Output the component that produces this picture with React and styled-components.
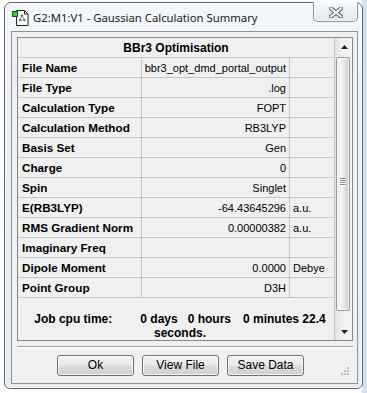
import styled, { createGlobalStyle } from "styled-components";

const GlobalStyle = createGlobalStyle`
  html, body {
    margin: 0;
    padding: 0;
  }
  body {
    background: #ffffff;
    overflow: hidden;
    font-family: "Liberation Sans", Arial, sans-serif;
  }
`;

const rows = [
  ["File Name", "bbr3_opt_dmd_portal_output", ""],
  ["File Type", ".log", ""],
  ["Calculation Type", "FOPT", ""],
  ["Calculation Method", "RB3LYP", ""],
  ["Basis Set", "Gen", ""],
  ["Charge", "0", ""],
  ["Spin", "Singlet", ""],
  ["E(RB3LYP)", "-64.43645296", "a.u."],
  ["RMS Gradient Norm", "0.00000382", "a.u."],
  ["Imaginary Freq", "", ""],
  ["Dipole Moment", "0.0000", "Debye"],
  ["Point Group", "D3H", ""],
];

function AppIcon() {
  return (
    <IconSvg width="17" height="16" viewBox="0 0 17 16">
      <path d="M4.5 0.5h8l3.5 3.5v11.5h-11.5z" fill="#fff" stroke="#222" />
      <path d="M12.5 0.5v3.5h3.5" fill="none" stroke="#222" />
      <path d="M10 5.5L8 10M10 5.5L12.5 10M8 10h4.5" stroke="#888" strokeWidth="1" fill="none" />
      <circle cx="10" cy="5.5" r="1.2" fill="#777" />
      <circle cx="8" cy="10" r="1.2" fill="#777" />
      <circle cx="12.5" cy="10" r="1.2" fill="#777" />
      <rect x="0.5" y="1.5" width="5" height="5" fill="#2fd12f" stroke="#1a5a1a" />
    </IconSvg>
  );
}

function CloseGlyph() {
  return (
    <svg width="14" height="11" viewBox="0 0 14 11">
      <path d="M2 1.5L12 9.5M12 1.5L2 9.5" stroke="#5d6670" strokeWidth="4.2" strokeLinecap="square" />
      <path d="M2 1.5L12 9.5M12 1.5L2 9.5" stroke="#f4f6f8" strokeWidth="2" strokeLinecap="square" />
    </svg>
  );
}

function Arrow({ down }) {
  return (
    <svg width="7" height="4" viewBox="0 0 7 4">
      <path d={down ? "M0 0h7L3.5 4z" : "M0 4h7L3.5 0z"} fill="#222" />
    </svg>
  );
}

function Grip() {
  return (
    <svg width="8" height="8" viewBox="0 0 8 8">
      <rect x="6" y="0" width="2" height="2" fill="#b8bcc2" />
      <rect x="3" y="3" width="2" height="2" fill="#b8bcc2" />
      <rect x="6" y="3" width="2" height="2" fill="#b8bcc2" />
      <rect x="0" y="6" width="2" height="2" fill="#b8bcc2" />
      <rect x="3" y="6" width="2" height="2" fill="#b8bcc2" />
      <rect x="6" y="6" width="2" height="2" fill="#b8bcc2" />
    </svg>
  );
}

export default function App() {
  return (
    <Desktop>
      <GlobalStyle />
      <Window>
        <TitleBar>
          <AppIcon />
          <Title>G2:M1:V1 - Gaussian Calculation Summary</Title>
          <CloseButton>
            <CloseGlyph />
          </CloseButton>
        </TitleBar>
        <Client>
          <Panel>
            <Table>
              <HeaderRow>BBr3 Optimisation</HeaderRow>
              {rows.map(([label, value, unit]) => (
                <Row key={label}>
                  <LabelCell>{label}</LabelCell>
                  <ValueCell>{value}</ValueCell>
                  <UnitCell>{unit}</UnitCell>
                </Row>
              ))}
              <JobArea>
                <JobLine>
                  Job cpu time:<Space w={28} />0 days<Space w={10} />0 hours
                  <Space w={12} />0 minutes 22.4
                </JobLine>
                <JobLine>seconds.</JobLine>
              </JobArea>
            </Table>
            <ScrollBar>
              <ArrowBox>
                <Arrow />
              </ArrowBox>
              <Track>
                <Thumb>
                  <GripLines>
                    <i />
                    <i />
                    <i />
                    <i />
                  </GripLines>
                </Thumb>
              </Track>
              <ArrowBox>
                <Arrow down />
              </ArrowBox>
            </ScrollBar>
          </Panel>
          <Separator />
          <ButtonRow>
            <PushButton>Ok</PushButton>
            <PushButton>View File</PushButton>
            <PushButton>Save Data</PushButton>
          </ButtonRow>
          <ResizeGrip>
            <Grip />
          </ResizeGrip>
        </Client>
      </Window>
    </Desktop>
  );
}

const Desktop = styled.div`
  width: 367px;
  height: 393px;
  box-sizing: border-box;
  padding: 2px 0 0 4px;
  background: linear-gradient(90deg, #ffffff 0 362px, #d3e2f1 362px);
`;

const Window = styled.div`
  position: relative;
  width: 359px;
  height: 387px;
  box-sizing: border-box;
  border: 1px solid #5b636d;
  border-radius: 7px 7px 6px 6px;
  background: linear-gradient(180deg, #f4f7fa 0%, #eaeff5 40%, #e8edf3 100%);
  box-shadow: inset 0 0 0 1px rgba(255, 255, 255, 0.85);
  padding: 0 4px 4px 6px;
  display: flex;
  flex-direction: column;
`;

const TitleBar = styled.div`
  height: 28px;
  display: flex;
  align-items: center;
`;

const IconSvg = styled.svg`
  margin-left: 1px;
  margin-top: 2px;
  flex: none;
`;

const Title = styled.span`
  margin-left: 4px;
  margin-top: 1px;
  font-family: "Noto Sans", "Open Sans", sans-serif;
  font-size: 11.3px;
  color: #1b1b1b;
  white-space: nowrap;
`;

const CloseButton = styled.div`
  margin-left: auto;
  align-self: flex-start;
  margin-top: -1px;
  width: 45px;
  height: 20px;
  box-sizing: border-box;
  border: 1px solid #8a94a0;
  border-top: none;
  border-radius: 0 0 5px 5px;
  background: linear-gradient(180deg, #f6f8fa 0%, #eef1f5 50%, #e4e9ee 100%);
  box-shadow: inset 0 0 0 1px rgba(255, 255, 255, 0.7);
  display: flex;
  align-items: center;
  justify-content: center;
  padding-top: 1px;
`;

const Client = styled.div`
  position: relative;
  flex: 1;
  border: 1px solid #8a929c;
  background: #f0f0f0;
  padding: 5px 4px 0 5px;
  display: flex;
  flex-direction: column;
`;

const Panel = styled.div`
  width: 336px;
  height: 304px;
  box-sizing: border-box;
  border: 1px solid #828790;
  display: flex;
  background: #f0f0f0;
`;

const Table = styled.div`
  width: 317px;
  display: flex;
  flex-direction: column;
  overflow: hidden;
`;

const lineColor = "#c6c6c6";

const HeaderRow = styled.div`
  height: 20px;
  box-sizing: border-box;
  border-bottom: 1px solid ${lineColor};
  border-right: 1px solid ${lineColor};
  display: flex;
  align-items: center;
  justify-content: center;
  font-size: 12px;
  font-weight: bold;
  color: #000;
`;

const Row = styled.div`
  display: grid;
  grid-template-columns: 124px 148px 45px;
  height: 20px;
`;

const Cell = styled.div`
  box-sizing: border-box;
  border-right: 1px solid ${lineColor};
  border-bottom: 1px solid ${lineColor};
  display: flex;
  align-items: center;
  white-space: nowrap;
  overflow: hidden;
  color: #000;
`;

const LabelCell = styled(Cell)`
  padding-left: 4px;
  font-size: 11.7px;
  font-weight: bold;
`;

const ValueCell = styled(Cell)`
  justify-content: flex-end;
  padding-right: 3px;
  font-size: 11px;
`;

const UnitCell = styled(Cell)`
  padding-left: 3px;
  font-size: 11px;
`;

const JobArea = styled.div`
  flex: 1;
  border-right: 1px solid ${lineColor};
  padding-top: 14px;
  box-sizing: border-box;
  overflow: hidden;
`;

const JobLine = styled.div`
  text-align: center;
  font-size: 12px;
  font-weight: bold;
  line-height: 14px;
  white-space: nowrap;
  padding-left: 8px;
`;

const Space = styled.span`
  display: inline-block;
  width: ${(p) => p.w}px;
`;

const ScrollBar = styled.div`
  width: 17px;
  display: flex;
  flex-direction: column;
  background: linear-gradient(90deg, #e2e2e2 0%, #f1f1f1 40%, #f4f4f4 100%);
`;

const ArrowBox = styled.div`
  height: 17px;
  display: flex;
  align-items: center;
  justify-content: center;
  padding-left: 1px;
`;

const Track = styled.div`
  flex: 1;
  padding: 2px 2px 0 1px;
`;

const Thumb = styled.div`
  height: 254px;
  box-sizing: border-box;
  border: 1px solid #9b9b9b;
  border-radius: 2px;
  background: linear-gradient(90deg, #eaeaea 0%, #f7f7f7 35%, #dedede 70%, #cfcfcf 100%);
  box-shadow: inset 0 0 0 1px rgba(255, 255, 255, 0.6);
  display: flex;
  align-items: center;
  justify-content: center;
`;

const GripLines = styled.div`
  display: flex;
  flex-direction: column;
  gap: 1px;
  margin-bottom: 6px;

  i {
    display: block;
    width: 6px;
    height: 1px;
    background: #8a8a8a;
    box-shadow: 0 1px 0 #fff;
  }
`;

const Separator = styled.div`
  width: 336px;
  margin-top: 5px;
  height: 2px;
  box-sizing: border-box;
  border-top: 1px solid #a0a0a0;
  border-bottom: 1px solid #ffffff;
`;

const ButtonRow = styled.div`
  display: flex;
  gap: 8px;
  margin-top: 7px;
  padding-left: 40px;
`;

const PushButton = styled.button`
  width: 77px;
  height: 21px;
  box-sizing: border-box;
  border: 1px solid #707070;
  border-radius: 3px;
  background: linear-gradient(180deg, #f2f2f2 0%, #ebebeb 48%, #dddddd 52%, #cfcfcf 100%);
  box-shadow: inset 0 0 0 1px rgba(255, 255, 255, 0.75);
  font-family: "Liberation Sans", Arial, sans-serif;
  font-size: 12px;
  color: #000;
  padding: 0 0 1px;
`;

const ResizeGrip = styled.div`
  position: absolute;
  right: 8px;
  bottom: 8px;
  width: 8px;
  height: 8px;
  line-height: 0;
`;
